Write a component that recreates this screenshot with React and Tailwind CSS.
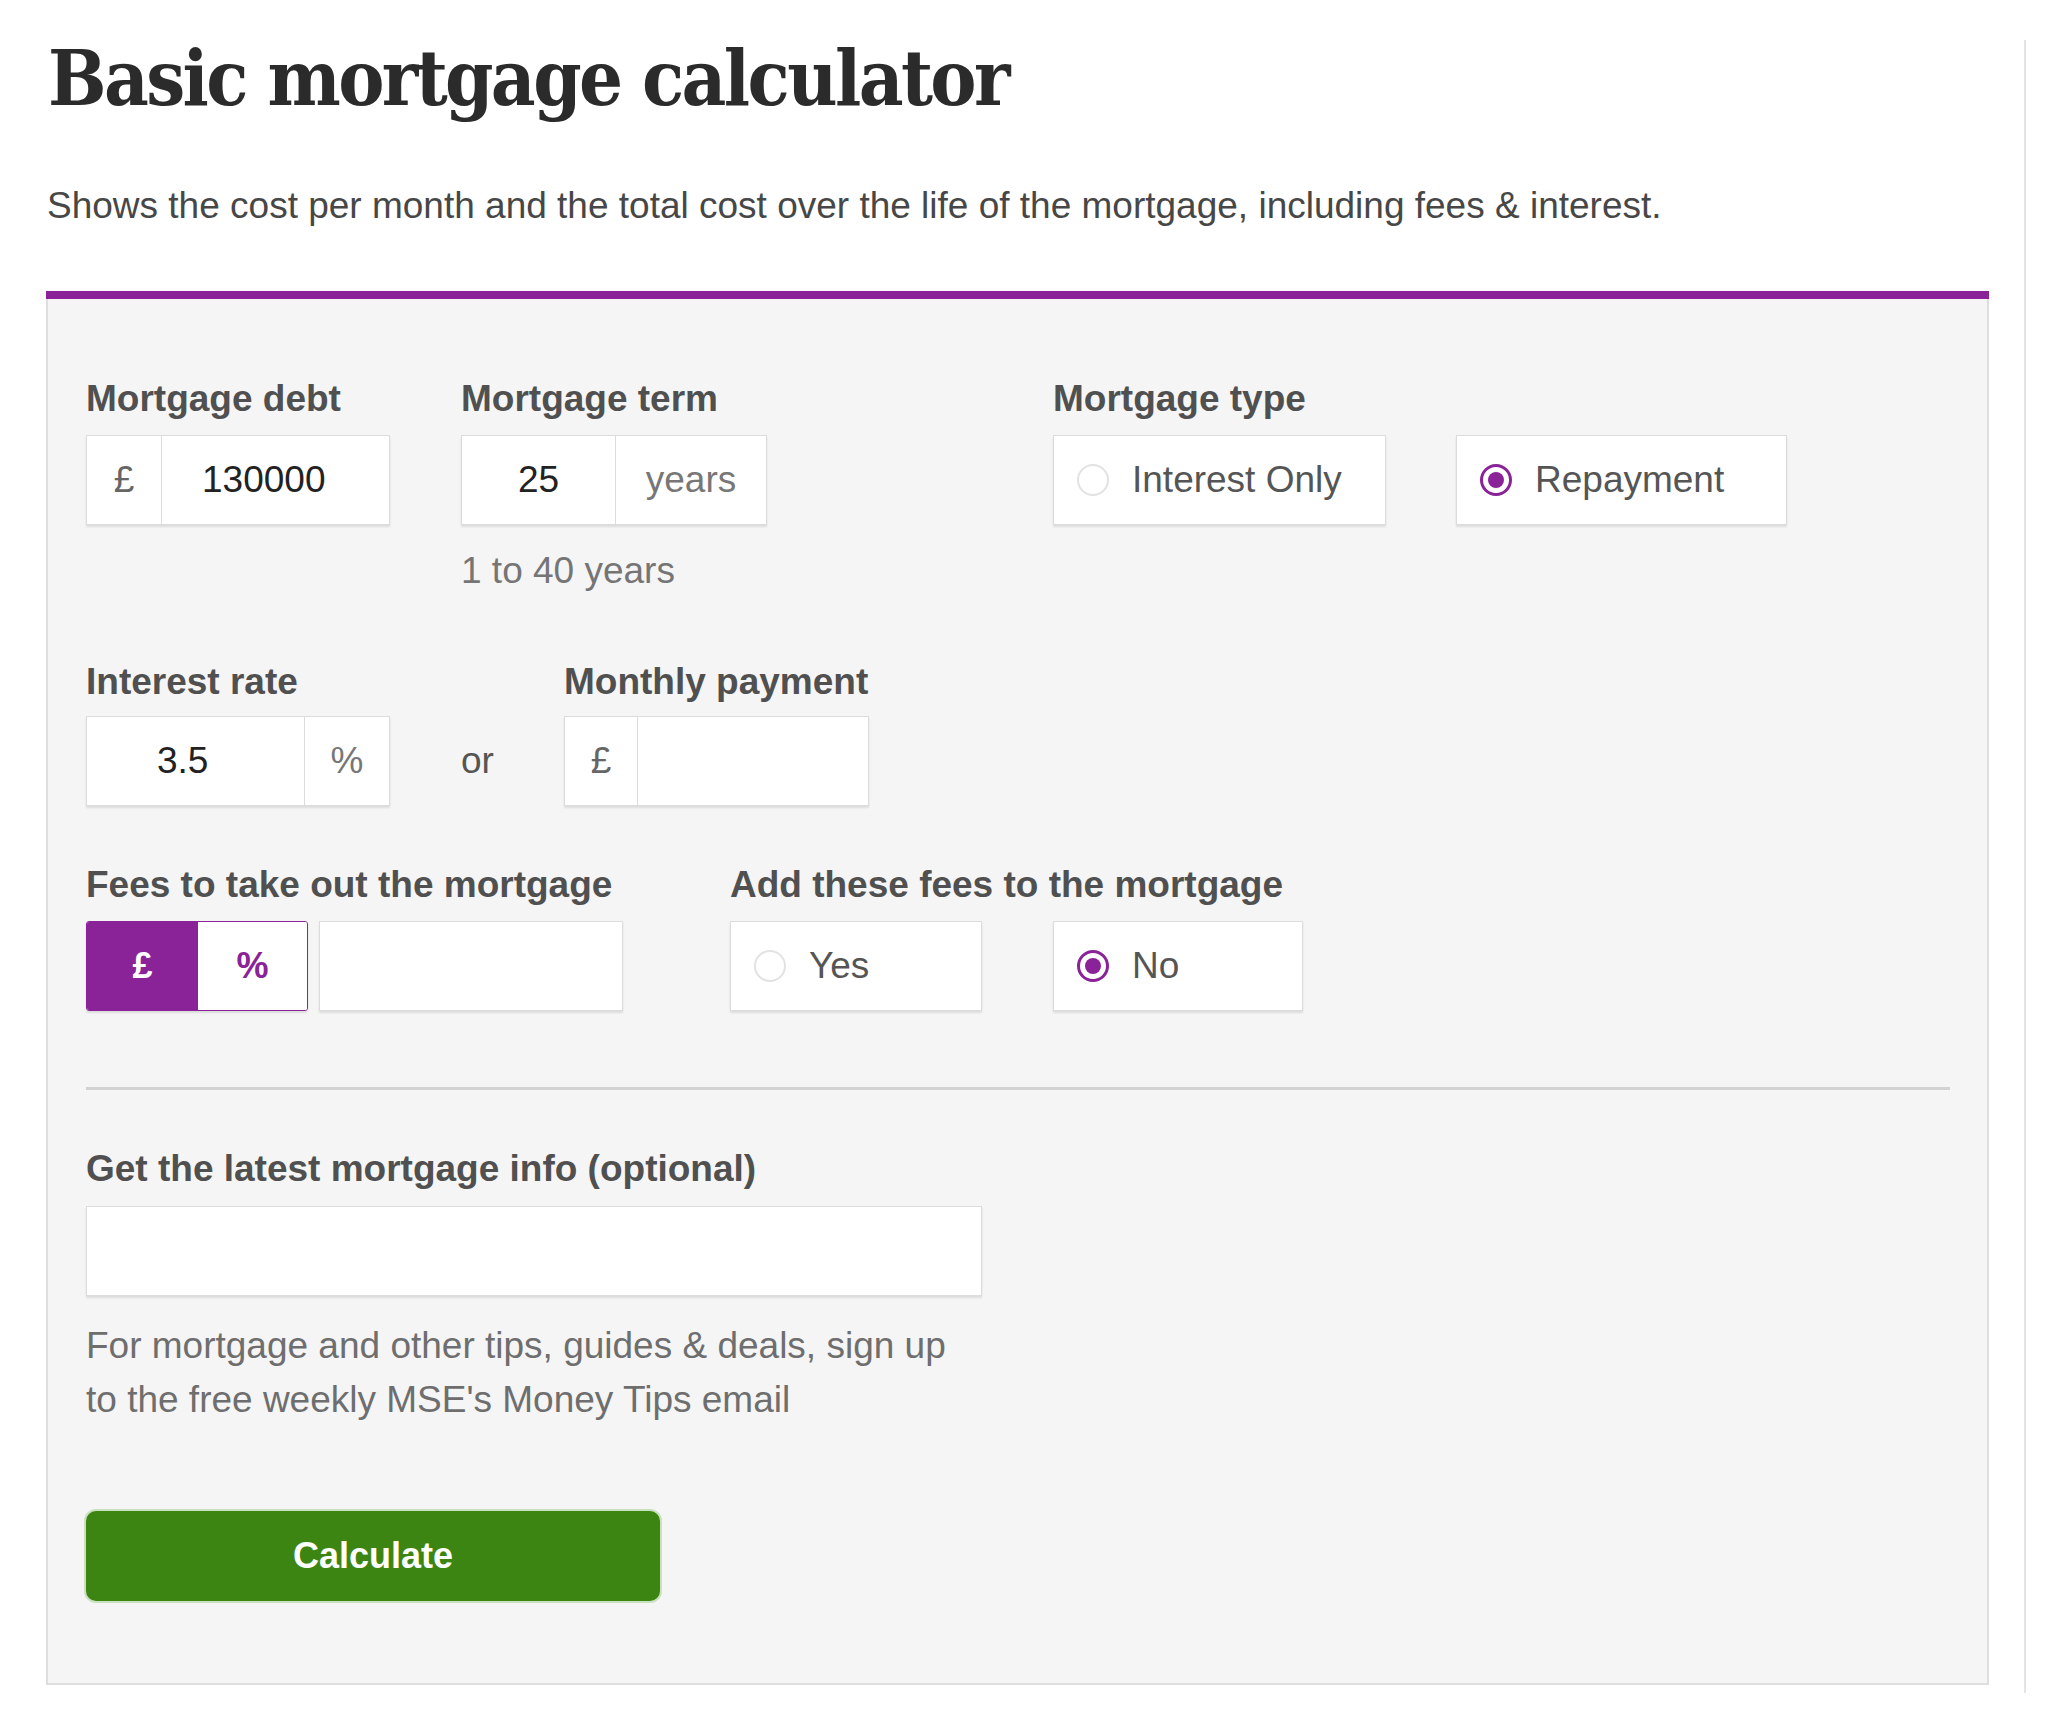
import React, { useState } from "react";

function Radio({ checked }) {
  return checked ? (
    <span className="flex h-[32px] w-[32px] shrink-0 items-center justify-center rounded-full border-[3px] border-[#8a2298] bg-white">
      <span className="h-[16px] w-[16px] rounded-full bg-[#8a2298]" />
    </span>
  ) : (
    <span className="h-[32px] w-[32px] shrink-0 rounded-full border-2 border-[#e2e2e2] bg-white" />
  );
}

function RadioBox({ label, checked, width, onClick }) {
  return (
    <button
      onClick={onClick}
      className={`flex h-[90px] items-center gap-[23px] border border-[#dcdcdc] bg-white pl-[23px] text-left text-[37px] text-[#555] shadow-[0_2px_2px_rgba(0,0,0,0.1)] ${width}`}
    >
      <Radio checked={checked} />
      <span>{label}</span>
    </button>
  );
}

function Label({ children }) {
  return (
    <div className="h-[40px] whitespace-nowrap text-[37px] leading-[40px] font-bold text-[#505050]">
      {children}
    </div>
  );
}

export default function App() {
  const [mortgageType, setMortgageType] = useState("repayment");
  const [addFees, setAddFees] = useState("no");
  const [feeMode, setFeeMode] = useState("pound");

  const boxClass =
    "flex h-[90px] border border-[#dcdcdc] bg-white shadow-[0_2px_2px_rgba(0,0,0,0.1)]";

  return (
    <div
      className="min-h-screen bg-white"
      style={{ fontFamily: '"Liberation Sans", Arial, sans-serif' }}
    >
      <div className="mt-[40px] w-[2026px] border-r-2 border-[#e4e4e4] pb-[8px] pl-[46px]">
        <h1
          className="ml-[2px] mt-[1px] h-[77px] text-[77px] leading-[77px] font-bold font-stretch-condensed tracking-[-2.6px] text-[#2b2b2b]"
          style={{ fontFamily: '"DejaVu Serif Condensed", "DejaVu Serif", serif' }}
        >
          Basic mortgage calculator
        </h1>
        <p className="ml-[1px] mt-[69px] whitespace-nowrap text-[37px] leading-[40px] text-[#474747]">
          Shows the cost per month and the total cost over the life of the
          mortgage, including fees &amp; interest.
        </p>

        <div className="mt-[65px] w-[1943px] border-x-2 border-b-2 border-[#dedede] bg-[#f5f5f5]">
          <div className="-mx-[2px] h-[8px] bg-[#8a2298]" />
          <div className="pl-[38px] pr-[38px] pt-[80px] pb-[82px]">
            {/* row 1 */}
            <div className="flex items-start">
              <div className="w-[375px]">
                <Label>Mortgage debt</Label>
                <div className={`${boxClass} mt-[16px] w-[304px]`}>
                  <div className="flex w-[75px] items-center justify-center border-r border-[#dcdcdc] text-[37px] text-[#666]">
                    £
                  </div>
                  <div className="flex flex-1 items-center pl-[40px] text-[37px] text-[#222]">
                    130000
                  </div>
                </div>
              </div>
              <div className="w-[592px]">
                <Label>Mortgage term</Label>
                <div className={`${boxClass} mt-[16px] w-[306px]`}>
                  <div className="flex w-[154px] items-center justify-center border-r border-[#dcdcdc] text-[37px] text-[#222]">
                    25
                  </div>
                  <div className="flex flex-1 items-center justify-center text-[37px] text-[#777]">
                    years
                  </div>
                </div>
                <div className="mt-[26px] text-[37px] leading-[40px] text-[#757575]">
                  1 to 40 years
                </div>
              </div>
              <div>
                <Label>Mortgage type</Label>
                <div className="mt-[16px] flex gap-[70px]">
                  <RadioBox
                    label="Interest Only"
                    checked={mortgageType === "interest"}
                    width="w-[333px]"
                    onClick={() => setMortgageType("interest")}
                  />
                  <RadioBox
                    label="Repayment"
                    checked={mortgageType === "repayment"}
                    width="w-[331px]"
                    onClick={() => setMortgageType("repayment")}
                  />
                </div>
              </div>
            </div>

            {/* row 2 */}
            <div className="mt-[71px] flex items-start">
              <div className="w-[375px]">
                <Label>Interest rate</Label>
                <div className={`${boxClass} mt-[14px] w-[304px]`}>
                  <div className="flex w-[218px] items-center border-r border-[#dcdcdc] pl-[70px] text-[37px] text-[#222]">
                    3.5
                  </div>
                  <div className="flex flex-1 items-center justify-center text-[37px] text-[#777]">
                    %
                  </div>
                </div>
              </div>
              <div className="flex w-[103px] pt-[54px]">
                <div className="flex h-[90px] items-center text-[37px] text-[#555]">
                  or
                </div>
              </div>
              <div>
                <Label>Monthly payment</Label>
                <div className={`${boxClass} mt-[14px] w-[305px]`}>
                  <div className="flex w-[73px] items-center justify-center border-r border-[#dcdcdc] text-[37px] text-[#666]">
                    £
                  </div>
                  <div className="flex-1" />
                </div>
              </div>
            </div>

            {/* row 3 */}
            <div className="mt-[59px] flex items-start">
              <div className="w-[644px]">
                <Label>Fees to take out the mortgage</Label>
                <div className="mt-[16px] flex gap-[11px]">
                  <div className="flex h-[90px] w-[222px] overflow-hidden rounded-[3px] border border-[#8a2298] shadow-[0_2px_2px_rgba(0,0,0,0.1)]">
                    <button
                      onClick={() => setFeeMode("pound")}
                      className={`flex w-[111px] items-center justify-center text-[36px] font-bold ${
                        feeMode === "pound" ? "bg-[#8a2298] text-white" : "bg-white text-[#8a2298]"
                      }`}
                    >
                      £
                    </button>
                    <button
                      onClick={() => setFeeMode("percent")}
                      className={`flex flex-1 items-center justify-center text-[36px] font-bold ${
                        feeMode === "percent" ? "bg-[#8a2298] text-white" : "bg-white text-[#8a2298]"
                      }`}
                    >
                      %
                    </button>
                  </div>
                  <div className={`${boxClass} w-[304px]`} />
                </div>
              </div>
              <div>
                <Label>Add these fees to the mortgage</Label>
                <div className="mt-[16px] flex gap-[71px]">
                  <RadioBox
                    label="Yes"
                    checked={addFees === "yes"}
                    width="w-[252px]"
                    onClick={() => setAddFees("yes")}
                  />
                  <RadioBox
                    label="No"
                    checked={addFees === "no"}
                    width="w-[250px]"
                    onClick={() => setAddFees("no")}
                  />
                </div>
              </div>
            </div>

            <div className="mt-[76px] h-[3px] w-[1864px] bg-[#d2d2d2]" />

            <div className="mt-[59px]">
              <Label>Get the latest mortgage info (optional)</Label>
              <div className={`${boxClass} mt-[17px] w-[896px]`} />
              <p className="mt-[23px] w-[960px] text-[37px] leading-[54px] text-[#6e6e6e]">
                For mortgage and other tips, guides &amp; deals, sign up
                <br />
                to the free weekly MSE's Money Tips email
              </p>
            </div>

            <button className="mt-[84px] flex h-[90px] w-[574px] items-center justify-center rounded-[10px] bg-[#3c8513] text-[36px] font-bold text-white shadow-[0_0_0_2px_rgba(120,190,90,0.35)]">
              Calculate
            </button>
          </div>
        </div>
      </div>
    </div>
  );
}
